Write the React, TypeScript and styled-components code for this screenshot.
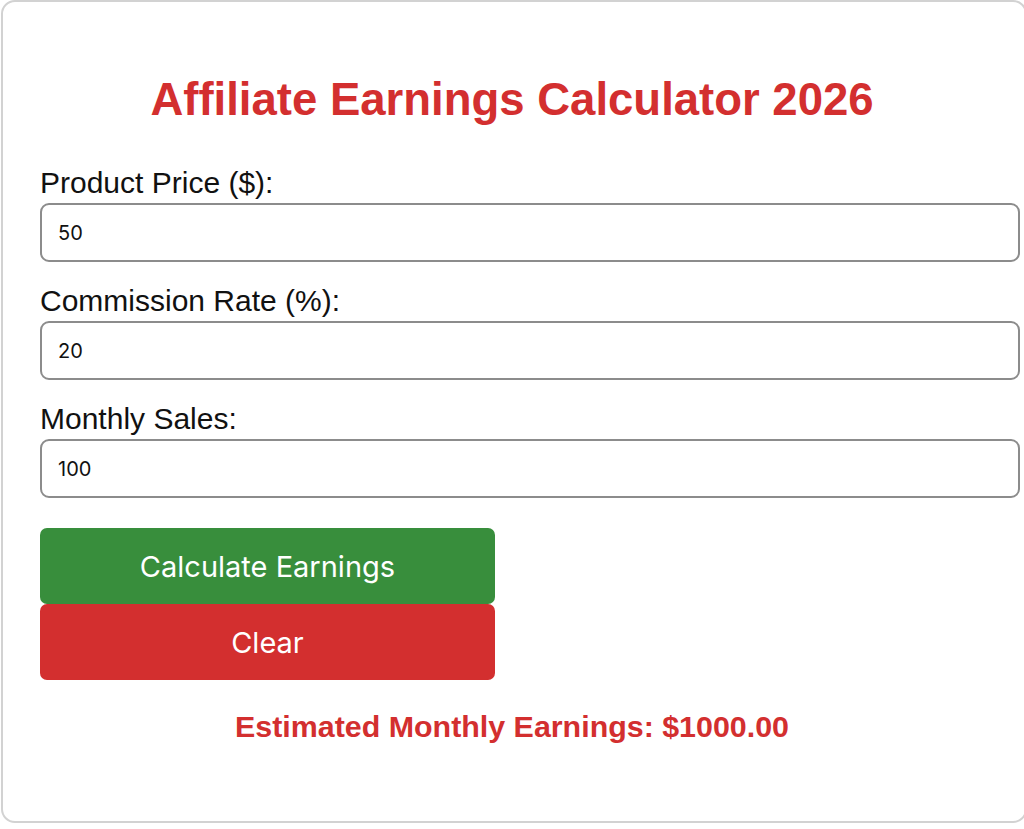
import * as React from 'react'
import styled, { createGlobalStyle } from 'styled-components'

const GlobalStyle = createGlobalStyle`
    html, body {
        margin: 0;
        padding: 0;
        background: #ffffff;
    }
    body {
        font-family: "Liberation Sans", Arial, sans-serif;
    }
`

const Card = styled.div`
    box-sizing: border-box;
    width: 1026px;
    margin-left: 1px;
    height: 823px;
    padding: 72px 41px 0 37px;
    border: 2px solid #d2d2d2;
    border-radius: 14px;
    background: #ffffff;
    display: flex;
    flex-direction: column;
`

const Title = styled.h1`
    margin: 0 0 40px;
    font-family: "Liberation Sans", Arial, sans-serif;
    font-size: 45.5px;
    font-weight: 700;
    line-height: 52px;
    color: #d32f2f;
    text-align: center;
`

const Field = styled.div`
    display: flex;
    flex-direction: column;
    margin-bottom: 22px;
`

const Label = styled.label`
    font-size: 30px;
    line-height: 34px;
    color: #111111;
    margin-bottom: 3px;
`

// width 100% plus padding and border, so the box runs past the column
const Input = styled.input`
    box-sizing: content-box;
    width: 100%;
    height: 55px;
    padding: 0 16px;
    border: 2px solid #8c8c8c;
    border-radius: 9px;
    font-family: Inter, "Noto Sans", sans-serif;
    font-size: 20px;
    color: #111111;
    background: #ffffff;
    outline: none;
`

const ButtonStack = styled.div`
    display: flex;
    flex-direction: column;
    margin-top: 8px;
`

const Button = styled.button<{ $tone: 'green' | 'red' }>`
    width: 455px;
    height: 76px;
    border: none;
    border-radius: 7px;
    background: ${p => (p.$tone === 'green' ? '#388e3c' : '#d32f2f')};
    color: #ffffff;
    font-family: Inter, "Noto Sans", sans-serif;
    font-size: 29px;
    cursor: pointer;
`

const Result = styled.div`
    margin-top: 29px;
    font-size: 30.4px;
    font-weight: 700;
    line-height: 34px;
    color: #d32f2f;
    text-align: center;
`

const App = () => {
    const [price, setPrice] = React.useState('50')
    const [rate, setRate] = React.useState('20')
    const [sales, setSales] = React.useState('100')
    const [earnings, setEarnings] = React.useState<number | null>(1000)

    const calculate = () => {
        const value = (parseFloat(price) || 0) * ((parseFloat(rate) || 0) / 100) * (parseFloat(sales) || 0)
        setEarnings(value)
    }

    const clear = () => {
        setPrice('')
        setRate('')
        setSales('')
        setEarnings(null)
    }

    return (
        <>
            <GlobalStyle />
            <Card>
                <Title>Affiliate Earnings Calculator 2026</Title>
                <Field>
                    <Label htmlFor="price">Product Price ($):</Label>
                    <Input id="price" type="text" value={price} onChange={e => setPrice(e.target.value)} />
                </Field>
                <Field>
                    <Label htmlFor="rate">Commission Rate (%):</Label>
                    <Input id="rate" type="text" value={rate} onChange={e => setRate(e.target.value)} />
                </Field>
                <Field>
                    <Label htmlFor="sales">Monthly Sales:</Label>
                    <Input id="sales" type="text" value={sales} onChange={e => setSales(e.target.value)} />
                </Field>
                <ButtonStack>
                    <Button $tone="green" onClick={calculate}>Calculate Earnings</Button>
                    <Button $tone="red" onClick={clear}>Clear</Button>
                </ButtonStack>
                <Result>{earnings !== null ? `Estimated Monthly Earnings: $${earnings.toFixed(2)}` : ''}</Result>
            </Card>
        </>
    )
}

export default App
